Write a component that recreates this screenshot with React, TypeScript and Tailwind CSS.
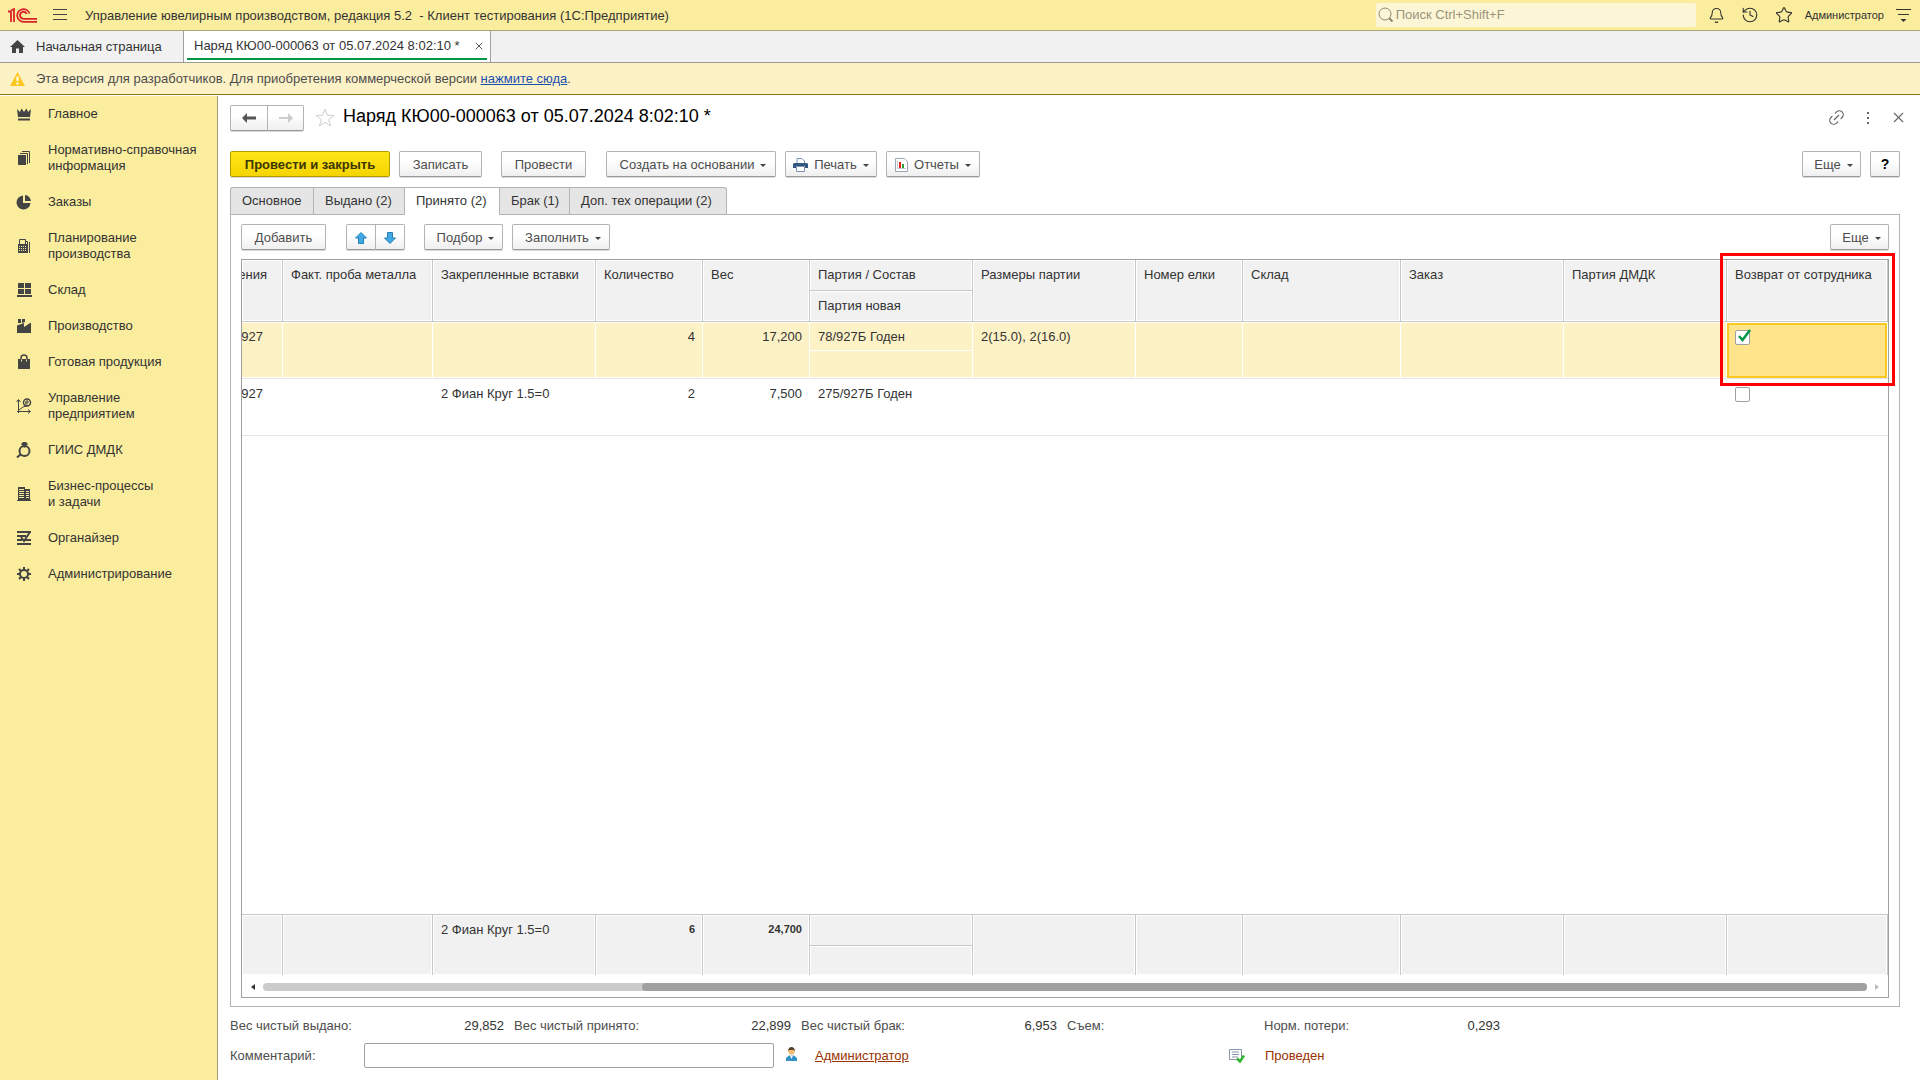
import type { ReactNode } from "react"
import { Bell, History, Link2, Star, X } from "lucide-react"

const sidebarItems = [
  { label: ["Главное"], icon: "crown" },
  { label: ["Нормативно-справочная", "информация"], icon: "docs" },
  { label: ["Заказы"], icon: "pie" },
  { label: ["Планирование", "производства"], icon: "calc" },
  { label: ["Склад"], icon: "boxes" },
  { label: ["Производство"], icon: "factory" },
  { label: ["Готовая продукция"], icon: "bag" },
  { label: ["Управление", "предприятием"], icon: "graph" },
  { label: ["ГИИС ДМДК"], icon: "ring" },
  { label: ["Бизнес-процессы", "и задачи"], icon: "building" },
  { label: ["Органайзер"], icon: "organizer" },
  { label: ["Администрирование"], icon: "gear" },
]

const sidebarIcons: Record<string, ReactNode> = {
  crown: <path d="M1 3l3 3 1.500-3.500L8 6l2.500-3.500L12 6l3-3-1 8H2zM2 12.500h12v2H2z" />,
  docs: (
    <>
      <path d="M2 5h8v10H2z" />
      <path d="M4 3.500h7.500V14M6 1.500h7.500V13" fill="none" stroke="#444" />
    </>
  ),
  pie: <path d="M7 1.500V9h7.500A7 7 0 1 1 7 1.500zM9 1a6.500 6.500 0 0 1 6 6H9z" />,
  calc: (
    <>
      <path d="M3.500 7V1.500H9.500V7" fill="none" stroke="#444" />
      <path d="M2 6h10v9H2zM13 4h1v11h-1z" />
      <path d="M3 8.500h8M3 10.500h8M3 12.500h8" stroke="#fbed9e" strokeDasharray="1 1" />
      <path d="M9.500 3.500h2V7" fill="none" stroke="#444" />
    </>
  ),
  boxes: <path d="M2 1h6v5H2zM9 1h6v5H9zM2 7h6v5H2zM9 7h6v5H9zM1 13h15v2H1z" />,
  factory: <path d="M2 1h3v4H2zM6 1h3v3L6 5zM1 7.500L8 5v4l7-4.500V15H1z" />,
  bag: (
    <>
      <path d="M2 5h12v10H2z" />
      <path d="M5 7V4a3 3 0 0 1 6 0v3" fill="none" stroke="#444" strokeWidth="1.500" />
      <path d="M5.500 5.500v2M10.500 5.500v2" stroke="#fbed9e" />
    </>
  ),
  graph: (
    <>
      <path d="M2.500 15V2M.5 4l2-2.500 2 2.500M1 13.500h13M12 11.500l2.500 2-2.500 2M3 12l4-3 3-1 2-1" fill="none" stroke="#444" />
      <circle cx="11" cy="4.500" r="3.500" fill="none" stroke="#444" strokeWidth="1.500" />
      <path d="M10 7V3h2v2h-2.500" fill="none" stroke="#444" />
    </>
  ),
  ring: (
    <>
      <circle cx="8.500" cy="9" r="5" fill="none" stroke="#444" strokeWidth="2" />
      <path d="M5 2 7 0h3l2 2-3.500 4z" />
      <path d="M5 12l-4 3.500" stroke="#444" strokeWidth="2" />
    </>
  ),
  building: (
    <>
      <path d="M2 1h7v2h5v11h1v1H1v-1h1z" />
      <path d="M3 3.500h5M3 5.500h5M3 7.500h5M3 9.500h5M3 11.500h5M10 5.500h3M10 7.500h3M10 9.500h3M10 11.500h3" stroke="#fbed9e" />
    </>
  ),
  organizer: (
    <>
      <path d="M1 1h14v2H1zM1 5h9v2H1zM1 9h5v2H1zM9 9h6v2H9zM1 13h14v2H1z" />
      <path d="M5 7l3 4 6-9" fill="none" stroke="#444" strokeWidth="2" />
    </>
  ),
  gear: (
    <>
      <circle cx="8" cy="8" r="4" fill="none" stroke="#444" strokeWidth="2" />
      <path
        d="M8 1v3M8 12v3M1 8h3M12 8h3M3 3l2 2M11 11l2 2M13 3l-2 2M3 13l2-2"
        stroke="#444"
        strokeWidth="2"
      />
    </>
  ),
}

const columns = [
  { title: "ения", col: "w-[41px]" },
  { title: "Факт. проба металла", col: "w-[150px]" },
  { title: "Закрепленные вставки", col: "w-[163px]" },
  { title: "Количество", col: "w-[107px]" },
  { title: "Вес", col: "w-[107px]" },
  { title: "Партия / Состав", sub: "Партия новая", col: "w-[163px]" },
  { title: "Размеры партии", col: "w-[163px]" },
  { title: "Номер елки", col: "w-[107px]" },
  { title: "Склад", col: "w-[158px]" },
  { title: "Заказ", col: "w-[163px]" },
  { title: "Партия ДМДК", col: "w-[163px]" },
  { title: "Возврат от сотрудника", col: "" },
]

const rows = [
  { cells: ["927", "", "", "4", "17,200", "78/927Б Годен", "2(15.0), 2(16.0)", "", "", "", ""], returned: true },
  { cells: ["927", "", "2 Фиан Круг 1.5=0", "2", "7,500", "275/927Б Годен", "", "", "", "", ""], returned: false },
]

const totals = ["", "", "2 Фиан Круг 1.5=0", "6", "24,700", "", "", "", "", "", "", ""]

const formTabs = [
  { label: "Основное", width: "w-[83px]" },
  { label: "Выдано (2)", width: "w-[91px]" },
  { label: "Принято (2)", width: "w-[95px]" },
  { label: "Брак (1)", width: "w-[70px]" },
  { label: "Доп. тех операции (2)", width: "w-[158px]" },
]

const weights = [
  { label: "Вес чистый выдано:", value: "29,852", width: "w-[274px]" },
  { label: "Вес чистый принято:", value: "22,899", width: "w-[277px]" },
  { label: "Вес чистый брак:", value: "6,953", width: "w-[256px]" },
  { label: "Съем:", value: "", width: "w-[187px]" },
  { label: "Норм. потери:", value: "0,293", width: "w-[236px]" },
]

function Caret() {
  return (
    <svg width="6" height="3" viewBox="0 0 6 3" className="mt-[2px] shrink-0">
      <path d="M0 0h6L3 3z" fill="#444" />
    </svg>
  )
}

function Button({ children, className = "", menu = false }: { children: ReactNode; className?: string; menu?: boolean }) {
  return (
    <button
      type="button"
      className={`flex h-[26px] items-center justify-center gap-[6px] whitespace-nowrap rounded-[2px] border border-[#b3b3b3] border-b-[#999] bg-gradient-to-b from-white from-40% to-[#efefef] pt-px text-[#4d4d4d] shadow-[0_1px_0_#d9d9d9] ${className}`}
    >
      {children}
      {menu && <Caret />}
    </button>
  )
}

function Columns() {
  return (
    <colgroup>
      {columns.map((c) => (
        <col key={c.title} className={c.col} />
      ))}
    </colgroup>
  )
}

function TopBar() {
  return (
    <header className="flex h-[31px] items-center border-b border-[#aba66f] bg-[#fbed9e] pl-2 pr-[9px]">
      <svg width="29" height="15" viewBox="0 0 29 15" fill="none" stroke="#d8232a" strokeWidth="1.800">
        <path d="M0 3.500h3V14M3 2.500 6 1v13" />
        <path d="M21.500 5.500A6.300 6.300 0 1 0 15.500 13.800H29" />
        <path d="M18.800 6A3.500 3.500 0 1 0 15.500 10.800H29" />
      </svg>
      <button type="button" aria-label="Меню" className="ml-4">
        <svg width="14" height="12" viewBox="0 0 14 12" stroke="#444">
          <path d="M0 .5h14M0 5.500h14M0 10.500h14" />
        </svg>
      </button>
      <h1 className="ml-[18px] whitespace-pre pt-px text-[#333]">
        Управление ювелирным производством, редакция 5.2{"  "}- Клиент тестирования (1С:Предприятие)
      </h1>
      <label className="mb-px ml-auto flex h-6 w-[320px] items-center rounded-[2px] bg-[#fdf6d6] pl-[2px]">
        <svg width="16" height="16" viewBox="0 0 16 16" fill="none" stroke="#8d8971" className="shrink-0">
          <circle cx="7" cy="7" r="6" />
          <path d="M11 11l3.500 3.500" strokeWidth="2" />
        </svg>
        <input
          type="search"
          aria-label="Поиск"
          placeholder="Поиск Ctrl+Shift+F"
          className="w-full bg-transparent pl-[2px] outline-none placeholder:text-[#99947a]"
        />
      </label>
      <button type="button" aria-label="Уведомления" className="ml-3">
        <Bell size={17} strokeWidth={1.5} color="#333" />
      </button>
      <button type="button" aria-label="История" className="ml-4">
        <History size={18} strokeWidth={1.5} color="#333" />
      </button>
      <button type="button" aria-label="Избранное" className="ml-4">
        <Star size={18} strokeWidth={1.5} color="#333" />
      </button>
      <a href="#user" className="ml-3 text-[11px] text-[#333]">
        Администратор
      </a>
      <button type="button" aria-label="Сервис" className="ml-3">
        <svg width="15" height="14" viewBox="0 0 15 14">
          <path d="M0 1.500h15M2 6.500h11" stroke="#333" />
          <path d="M4.500 11h6l-3 3z" fill="#333" />
        </svg>
      </button>
    </header>
  )
}

function WindowTabs() {
  return (
    <nav className="flex h-8 border-b border-[#9c9c97] bg-[#f1f1f1] text-[#333]">
      <a href="#home" className="flex w-[183px] items-center pl-[10px]">
        <svg width="15" height="13" viewBox="0 0 15 13" fill="#444">
          <path d="M7.500 0 15 7h-2v6H9V8.500H6V13H2V7H0z" />
        </svg>
        <span className="ml-[11px]">Начальная страница</span>
      </a>
      <div className="flex w-[308px] flex-col border-x border-[#a0a0a0] bg-white px-[3px] pb-[2px]">
        <div className="flex flex-1 items-center justify-between border-b-2 border-[#009646] pl-[7px] pr-[2px] pt-[3px]">
          <a href="#order">Наряд КЮ00-000063 от 05.07.2024 8:02:10 *</a>
          <button type="button" aria-label="Закрыть вкладку">
            <X size={12} strokeWidth={2} color="#555" />
          </button>
        </div>
      </div>
    </nav>
  )
}

function Notice() {
  return (
    <div className="flex h-8 items-center border-b border-[#8f7514] bg-[#fdf2c6] pl-[10px] text-[#4d4d4d]">
      <svg width="15" height="14" viewBox="0 0 15 14">
        <path d="M7.500 0 15 14H0z" fill="#fcc81f" />
        <path d="M7.500 4.500V9M7.500 10.500v2" stroke="#fff" strokeWidth="2" />
      </svg>
      <p className="ml-[11px]">
        Эта версия для разработчиков. Для приобретения коммерческой версии{" "}
        <a href="#buy" className="text-[#1a4fb0] underline">
          нажмите сюда
        </a>
        .
      </p>
    </div>
  )
}

function Sidebar() {
  return (
    <nav className="mt-px w-[218px] shrink-0 border-r border-[#a09b72] bg-[#fbed9e]">
      {sidebarItems.map((item) => (
        <a key={item.icon} href={`#${item.icon}`} className="flex items-center gap-4 py-[10px] pl-4 leading-4 text-[#333]">
          <svg width="16" height="16" viewBox="0 0 16 16" fill="#444" className="shrink-0">
            {sidebarIcons[item.icon]}
          </svg>
          <span>
            {item.label.map((line) => (
              <span key={line} className="block">
                {line}
              </span>
            ))}
          </span>
        </a>
      ))}
    </nav>
  )
}

function FormHeader() {
  return (
    <div className="flex h-[25px] items-center">
      <div className="flex">
        <Button className="w-[38px] rounded-r-none">
          <svg width="14" height="10" viewBox="0 0 14 10" fill="#555">
            <path d="M0 5l5-5v3.500h9v3H5V10z" />
          </svg>
        </Button>
        <Button className="-ml-px w-[37px] rounded-l-none">
          <svg width="14" height="10" viewBox="0 0 14 10" fill="#ccc">
            <path d="M14 5 9 0v4H0v2h9v4z" />
          </svg>
        </Button>
      </div>
      <button type="button" aria-label="Добавить в избранное" className="ml-[11px]">
        <svg width="20" height="20" viewBox="0 0 20 20" fill="none" stroke="#d0d0d0">
          <path d="M10 1l2.300 6.300 6.700.2-5.300 4.100 1.900 6.400-5.600-3.800L4.400 18l1.900-6.400L1 7.500l6.700-.2z" />
        </svg>
      </button>
      <h2 className="ml-2 pb-[2px] text-[18px] text-black">Наряд КЮ00-000063 от 05.07.2024 8:02:10 *</h2>
      <div className="-mr-[7px] ml-auto flex items-center text-[#666]">
        <button type="button" aria-label="Ссылка">
          <Link2 size={19} strokeWidth={1.5} className="-rotate-45" />
        </button>
        <button type="button" aria-label="Действия" className="ml-5">
          <svg width="4" height="12" viewBox="0 0 4 12" fill="#666">
            <path d="M1 0h2v2H1zM1 5h2v2H1zM1 10h2v2H1z" />
          </svg>
        </button>
        <button type="button" aria-label="Закрыть" className="ml-5">
          <X size={17} strokeWidth={1.5} />
        </button>
      </div>
    </div>
  )
}

function CommandBar() {
  return (
    <div className="mt-[21px] flex">
      <button
        type="button"
        className="h-[26px] w-[160px] rounded-[2px] border border-[#b39c00] bg-gradient-to-b from-[#ffe617] to-[#f5d400] pt-px font-bold text-[#3c3600] shadow-[0_1px_0_#d9d9d9]"
      >
        Провести и закрыть
      </button>
      <Button className="ml-[9px] w-[83px]">Записать</Button>
      <Button className="ml-[19px] w-[85px]">Провести</Button>
      <Button menu className="ml-5 w-[170px] pl-1">
        Создать на основании
      </Button>
      <Button menu className="ml-[9px] w-[92px]">
        <svg width="15" height="14" viewBox="0 0 15 14">
          <path d="M4 5V.5h5L11.500 3v2" fill="#fff" stroke="#7d93ad" />
          <path d="M1 5h13l1 1v4h-3V8H3v2H0V6z" fill="#32587f" />
          <path d="M3.500 8.500h8v5h-8z" fill="#fff" stroke="#7d93ad" />
        </svg>
        Печать
      </Button>
      <Button menu className="ml-[9px] w-[94px]">
        <svg width="13" height="14" viewBox="0 0 13 14">
          <path d="M.5.5h9l3 3v10H.5z" fill="#fff" stroke="#9aa5b5" />
          <path d="M4 4h2v6H4z" fill="#e32222" />
          <path d="M7 6h2v4H7z" fill="#2ea52e" />
          <path d="M2.500 3v7.500H11" fill="none" stroke="#c3c9d2" />
        </svg>
        Отчеты
      </Button>
      <Button menu className="ml-auto w-[59px] pl-1">
        Еще
      </Button>
      <Button className="ml-[9px] w-[30px] text-[14px] font-bold text-black">?</Button>
    </div>
  )
}

function ItemsTable() {
  return (
    <div className="relative mt-[9px] flex flex-1 flex-col border border-[#a0a0a0]">
      <table className="w-full table-fixed border-separate border-spacing-0 text-left text-[#333]">
        <Columns />
        <thead>
          <tr>
            {columns.map((c, i) => (
              <th
                key={c.title}
                scope="col"
                className="h-[62px] overflow-hidden whitespace-nowrap border-b border-r border-[#c8c8c8] bg-[#f1f1f1] p-0 align-top font-normal shadow-[inset_0_0_0_1px_#fff]"
              >
                {i === 0 ? (
                  <div className="flex w-[25px] justify-end overflow-hidden pt-[7px] leading-4">{c.title}</div>
                ) : (
                  <div className="h-[30px] pl-2 pt-[7px] leading-4">{c.title}</div>
                )}
                {c.sub && (
                  <div className="h-[31px] border-t border-[#c8c8c8] pl-2 pt-[7px] leading-4 shadow-[inset_0_0_0_1px_#fff]">
                    {c.sub}
                  </div>
                )}
              </th>
            ))}
          </tr>
        </thead>
        <tbody>
          {rows.map((row) => (
            <tr key={row.cells[5]} className={row.returned ? "bg-[#fdf2c6]" : "bg-white"}>
              {row.cells.map((cell, i) => (
                <td
                  key={i}
                  className={`h-[57px] overflow-hidden whitespace-nowrap border-b border-[#e5e5e5] p-0 align-top leading-4 ${
                    row.returned ? "border-r border-r-white shadow-[inset_0_1px_0_#fff,inset_0_-1px_0_#fff]" : "border-r border-r-transparent"
                  }`}
                >
                  {i === 0 ? (
                    <div className="flex w-[21px] justify-end overflow-hidden pt-[7px]">{cell}</div>
                  ) : (
                    <div className={`h-7 px-2 pt-[7px] ${i === 3 || i === 4 ? "pr-[7px] text-right" : ""}`}>{cell}</div>
                  )}
                  {i === 5 && row.returned && <div className="border-t border-white" />}
                </td>
              ))}
              <td className="h-[57px] border-b border-[#e5e5e5] bg-white p-0 align-top">
                <div
                  className={`mt-px mr-px h-[55px] border-2 pl-[6px] pt-[5px] ${
                    row.returned ? "border-[#fbc821] bg-[#ffe48c]" : "border-transparent"
                  }`}
                >
                  <label className="relative block h-[15px] w-[15px]">
                    <input
                      type="checkbox"
                      aria-label="Возврат от сотрудника"
                      defaultChecked={row.returned}
                      className="peer block h-[15px] w-[15px] appearance-none rounded-[2px] border border-[#a0a0a0] bg-white"
                    />
                    <svg
                      width="14"
                      height="13"
                      viewBox="0 0 14 13"
                      className="pointer-events-none absolute -top-px left-[2px] hidden peer-checked:block"
                    >
                      <path d="M2 7l3.500 4L13 1" fill="none" stroke="#009646" strokeWidth="2.500" />
                    </svg>
                  </label>
                </div>
              </td>
            </tr>
          ))}
        </tbody>
      </table>
      <div className="flex-1" />
      <table className="w-full table-fixed border-separate border-spacing-0 text-[#333]">
        <Columns />
        <tfoot>
          <tr>
            {totals.map((cell, i) => (
              <td
                key={i}
                className="h-[61px] border-r border-t border-[#c8c8c8] bg-[#f1f1f1] p-0 align-top leading-4 shadow-[inset_0_0_0_1px_#fff]"
              >
                <div className={`h-[30px] px-2 ${i === 3 || i === 4 ? "pr-[7px] pt-[6px] text-right text-[11px] font-bold" : "pt-[7px]"}`}>
                  {cell}
                </div>
                {i === 5 && <div className="h-[30px] border-t border-[#c8c8c8] shadow-[inset_0_0_0_1px_#fff]" />}
              </td>
            ))}
          </tr>
        </tfoot>
      </table>
      <div className="flex h-[22px] items-center pb-[3px] pl-[9px] pr-[9px] pt-[5px]">
        <svg width="4" height="6" viewBox="0 0 4 6">
          <path d="M4 0v6L0 3z" fill="#333" />
        </svg>
        <div className="ml-2 flex h-2 flex-1 justify-end rounded-full bg-[#cbcbcb]">
          <div className="h-2 w-[76.4%] rounded-full bg-[#a0a0a0]" />
        </div>
        <svg width="4" height="6" viewBox="0 0 4 6" className="ml-2">
          <path d="M0 0v6l4-3z" fill="#bbb" />
        </svg>
      </div>
      <div className="pointer-events-none absolute -right-[7px] -top-[7px] h-[133px] w-[175px] border-[3px] border-[#fe0000]" />
    </div>
  )
}

function Footer() {
  return (
    <footer className="pb-3 pt-[11px] text-[#4d4d4d]">
      <div className="flex gap-[10px] leading-4">
        {weights.map((w) => (
          <div key={w.label} className={`flex justify-between ${w.width}`}>
            <span>{w.label}</span>
            <span className="text-[#333]">{w.value}</span>
          </div>
        ))}
      </div>
      <div className="mt-[9px] flex h-[25px] items-center">
        <label htmlFor="comment" className="w-[134px]">
          Комментарий:
        </label>
        <input id="comment" type="text" className="h-[25px] w-[410px] rounded-[2px] border border-[#a0a0a0] bg-white px-2" />
        <svg width="11" height="14" viewBox="0 0 11 14" className="mb-[3px] ml-3">
          <path d="M0 14v-3l3-2.500h5L11 11v3z" fill="#3292c8" />
          <path d="M4 8.500h3L5.500 12z" fill="#fff" />
          <circle cx="5.500" cy="4.500" r="3.200" fill="#f1bd78" />
          <path d="M2 4.500C2 1.500 3.500 0 5.500 0S9 1.500 9 4.500L8 3H3z" fill="#5a4126" />
        </svg>
        <div className="ml-[18px] w-[414px]">
          <a href="#author" className="text-[#993300] underline">
            Администратор
          </a>
        </div>
        <svg width="16" height="14" viewBox="0 0 16 14">
          <path d="M.5.5h12v10H.5z" fill="#fff" stroke="#8794a8" />
          <path d="M3 3h7M3 5.500h7M3 8h6" stroke="#8794a8" />
          <path d="M8 9.500l3 3 4-6" fill="none" stroke="#2fb62f" strokeWidth="2.500" />
        </svg>
        <span className="ml-5 text-[#993300]">Проведен</span>
      </div>
    </footer>
  )
}

function App() {
  return (
    <div className="flex min-h-screen flex-col bg-white font-['Liberation_Sans',Arial,sans-serif] text-[13px]">
      <TopBar />
      <WindowTabs />
      <Notice />
      <div className="flex flex-1">
        <Sidebar />
        <main className="flex min-w-0 flex-1 flex-col pl-3 pr-5 pt-[10px]">
          <FormHeader />
          <CommandBar />
          <div className="mt-[10px] flex h-[27px]" role="tablist">
            {formTabs.map((tab, i) => (
              <button
                key={tab.label}
                type="button"
                role="tab"
                aria-selected={i === 2}
                className={`whitespace-nowrap border-l border-t border-[#b3b3b3] pl-[11px] text-left text-[#333] first:rounded-tl-[3px] last:rounded-tr-[3px] last:border-r ${tab.width} ${
                  i === 2 ? "relative -mb-px bg-white pb-px" : "bg-[#e5e5e5]"
                }`}
              >
                {tab.label}
              </button>
            ))}
          </div>
          <section className="flex flex-1 flex-col border border-[#b3b3b3] px-[10px] pb-2 pt-[9px]">
            <div className="flex">
              <Button className="w-[85px]">Добавить</Button>
              <Button className="ml-5 w-[30px] rounded-r-none">
                <svg width="12" height="12" viewBox="0 0 12 12" fill="#3fa9e6" stroke="#2b7fb5">
                  <path d="M6 .5 11.500 6H8.500v5.500h-5V6H.5z" />
                </svg>
              </Button>
              <Button className="-ml-px w-[30px] rounded-l-none">
                <svg width="12" height="12" viewBox="0 0 12 12" fill="#3fa9e6" stroke="#2b7fb5">
                  <path d="M6 11.500.5 6h3V.5h5V6h3z" />
                </svg>
              </Button>
              <Button menu className="ml-[19px] w-[79px] pl-1">
                Подбор
              </Button>
              <Button menu className="ml-[9px] w-[98px] pl-1">
                Заполнить
              </Button>
              <Button menu className="ml-auto w-[59px] pl-1">
                Еще
              </Button>
            </div>
            <ItemsTable />
          </section>
          <Footer />
        </main>
      </div>
    </div>
  )
}

export default App
